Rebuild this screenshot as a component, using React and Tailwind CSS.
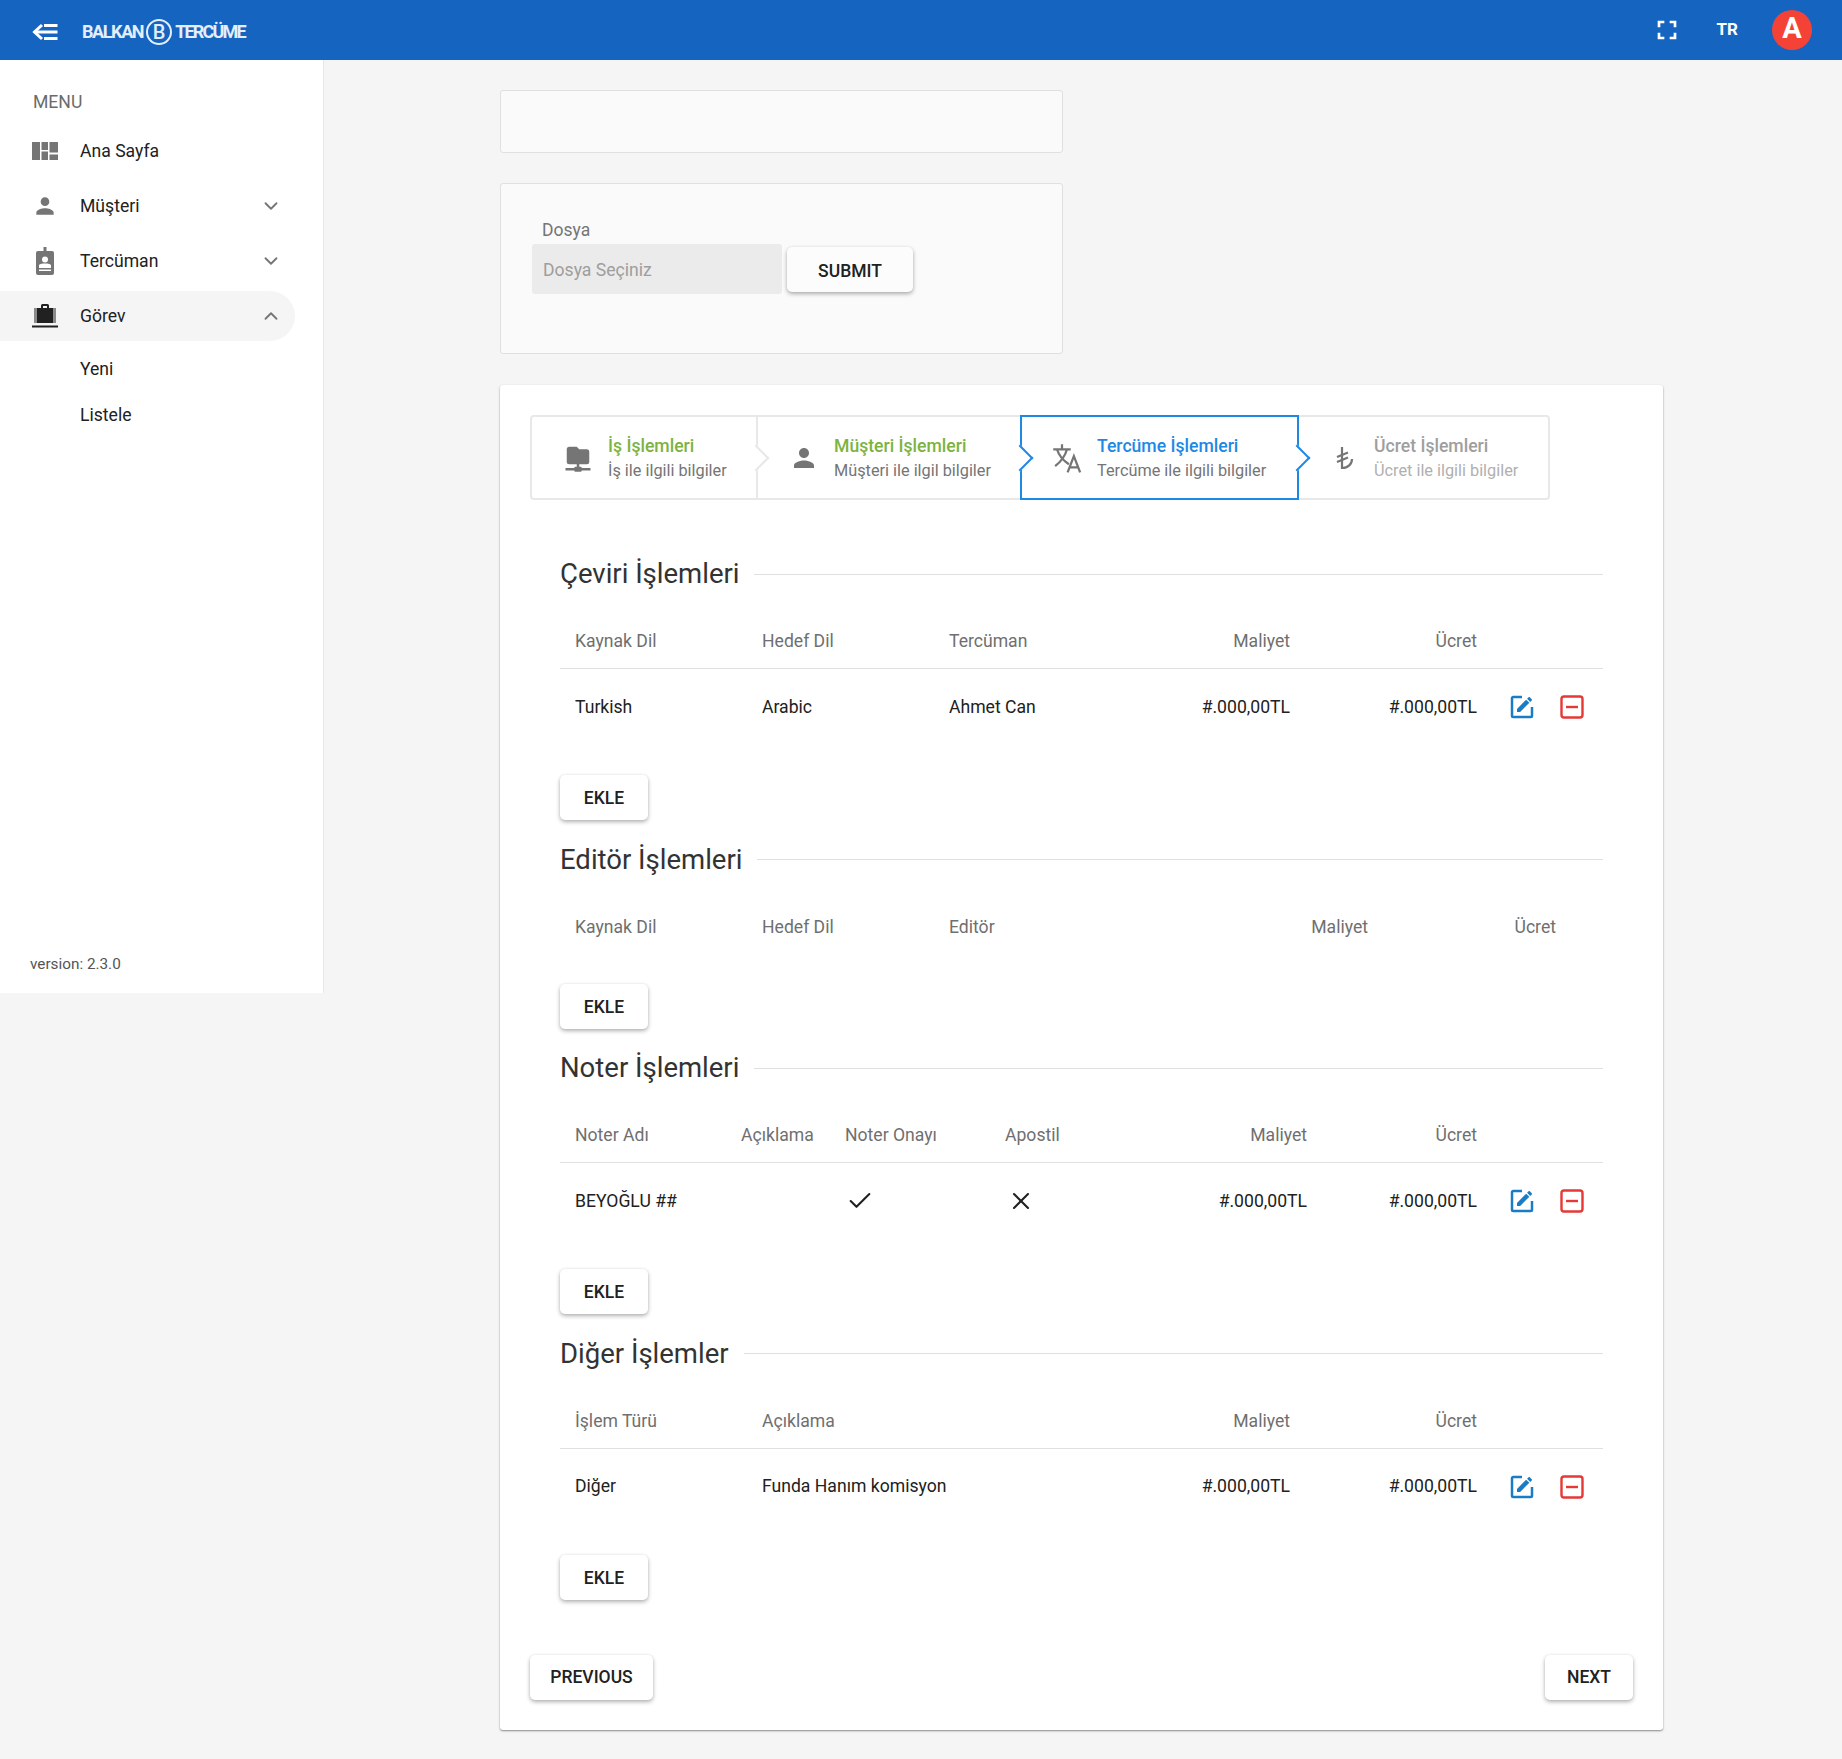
// Görev detail page: sidebar, file box, step bar and the four cost tables.
import React from 'react';
import { ChevronDown, ChevronUp, Check, X } from 'lucide-react';
import { MdPerson, MdFullscreen } from 'react-icons/md';

const FOLDER_NETWORK = 'M3,15V5A2,2 0 0,1 5,3H11L13,5H19A2,2 0 0,1 21,7V15A2,2 0 0,1 19,17H13V19H14A1,1 0 0,1 15,20H22V22H15A1,1 0 0,1 14,23H10A1,1 0 0,1 9,22H2V20H9A1,1 0 0,1 10,19H11V17H5A2,2 0 0,1 3,15Z';
const EDIT_BOX = 'M5,3C3.89,3 3,3.89 3,5V19A2,2 0 0,0 5,21H19A2,2 0 0,0 21,19V12H19V19H5V5H12V3H5M17.78,4C17.61,4 17.43,4.07 17.3,4.2L16.08,5.41L18.58,7.91L19.8,6.7C20.06,6.44 20.06,6 19.8,5.75L18.25,4.2C18.12,4.07 17.95,4 17.78,4M15.37,6.12L8,13.5V16H10.5L17.87,8.62L15.37,6.12Z';

// ---------- Small icons ----------

function BackIcon() {
  return (
    <svg className="w-[27px] h-[18px] mt-[3px] text-white" viewBox="0 0 27 18" fill="none" stroke="currentColor" strokeWidth="3">
      <path d="M11 2 L3.500 9 L11 16" />
      <path d="M3.500 9H26.500M13 2.500H26.500M13 15.500H26.500" />
    </svg>
  );
}

function DashIcon() {
  return (
    <svg className="w-[26px] h-[18px] text-[#757575]" viewBox="0 0 26 18" fill="currentColor">
      <path d="M0 0H8V18H0ZM9.500 0H16V8H9.500ZM9.500 9.500H16V18H9.500ZM17.500 0H26V10.500H17.500ZM17.500 12.500H26V18H17.500Z" />
    </svg>
  );
}

function BadgeIcon() {
  return (
    <svg className="w-[20px] h-[28px] text-[#757575]" viewBox="0 0 20 28" fill="currentColor">
      <path fillRule="evenodd" d="M8.500 0H11.500V4H17A2 2 0 0 1 19 6V26A2 2 0 0 1 17 28H3A2 2 0 0 1 1 26V6A2 2 0 0 1 3 4H8.500ZM10 9.500A3 3 0 1 0 10 15.500A3 3 0 1 0 10 9.500ZM4 21V18.500C4 17 7 16.500 10 16.500C13 16.500 16 17 16 18.500V21ZM4 22.500V24H16V22.500Z" />
    </svg>
  );
}

function BagIcon() {
  return (
    <svg className="w-[26px] h-[24px] text-[#212121]" viewBox="0 0 26 24" fill="currentColor">
      <path fillRule="evenodd" d="M9 4V1.500A1.500 1.500 0 0 1 10.500 0H15.500A1.500 1.500 0 0 1 17 1.500V4H21.500V19H4.500V4ZM11 2V4H15V2Z" />
      <path d="M2.500 4H3.500V19H2.500ZM22.500 4H23.500V19H22.500ZM0 21.500H26V23.500H0Z" />
    </svg>
  );
}

function TranslateIcon() {
  return (
    <svg className="w-[30px] h-[30px]" viewBox="0 0 24 24" fill="none" stroke="currentColor" strokeWidth="1.800">
      <path d="M1 5H15M8 1V5" />
      <path d="M4 5C5.500 10 9 14 13.500 17M12 5C10.500 10.500 7 15 2.500 18.500" />
      <path d="M12.500 23.500L17.500 10.500L22.500 23.500M14.200 19.500H20.800" />
    </svg>
  );
}

function LiraIcon() {
  return (
    <svg className="w-[24px] h-[26px] ml-[1px] text-[#757575]" viewBox="0 0 24 26" fill="none" stroke="currentColor" strokeWidth="2.200">
      <path d="M9 2V23C15 23 19 19 19 14" />
      <path d="M4 12L15 7.500M4 17L15 12.500" />
    </svg>
  );
}

function EditIcon() {
  return (
    <svg className="w-[30px] h-[30px] text-[#1a7cc4]" viewBox="0 0 24 24" fill="currentColor">
      <path d={EDIT_BOX} />
    </svg>
  );
}

function DeleteIcon() {
  return (
    <svg className="w-[24px] h-[24px] text-[#e53935]" viewBox="0 0 24 24" fill="none" stroke="currentColor" strokeWidth="2.400">
      <rect x="1.500" y="1.500" width="21" height="21" rx="2.500" />
      <path d="M6 12H18" />
    </svg>
  );
}

// ---------- Header + sidebar ----------

function Header() {
  return (
    <header className="h-[60px] bg-[#1565c0] flex items-center pl-[31px] pr-[30px] text-white">
      <BackIcon />
      <div className="ml-[24px] mt-[3px] flex items-center font-bold text-[18px] tracking-[-1.400px] text-[#e3eefa]">
        <span>BALKAN</span>
        <span className="mx-[3px] w-[26px] h-[26px] rounded-full border-2 border-[#e3eefa] flex items-center justify-center text-[20px] font-medium tracking-normal">B</span>
        <span className="tracking-[-1.800px]">TERCÜME</span>
      </div>
      <div className="ml-auto flex items-center">
        <MdFullscreen className="text-[32px]" />
        <span className="ml-[34px] text-[17px] font-bold">TR</span>
        <span className="ml-[34px] w-[40px] h-[40px] rounded-full bg-[#f44336] flex items-center justify-center text-[29px] font-bold pb-[3px]">A</span>
      </div>
    </header>
  );
}

function MenuRow({ icon, label, chevron, active }) {
  return (
    <div className={`h-[50px] w-[295px] mb-[5px] flex items-center rounded-r-full ${active ? 'bg-[#f5f5f5]' : ''}`}>
      <div className="w-[80px] pl-[32px] flex-none flex items-center justify-center pr-[22px]">{icon}</div>
      <span className="text-[17.600px] text-[#212121]">{label}</span>
      {chevron === 'down' && <ChevronDown className="ml-auto mr-[13px] w-[22px] h-[22px] text-[#757575]" />}
      {chevron === 'up' && <ChevronUp className="ml-auto mr-[13px] w-[22px] h-[22px] text-[#757575]" />}
    </div>
  );
}

function Sidebar() {
  return (
    <aside className="w-[324px] h-[933px] flex-none bg-white border-r border-[#e8e8e8] flex flex-col">
      <div className="pt-[30px] pl-[33px] text-[17.600px] leading-[24px] text-[#6b6b6b] mb-[12px]">MENU</div>
      <MenuRow icon={<DashIcon />} label="Ana Sayfa" />
      <MenuRow icon={<MdPerson className="text-[32px] text-[#757575]" />} label="Müşteri" chevron="down" />
      <MenuRow icon={<BadgeIcon />} label="Tercüman" chevron="down" />
      <MenuRow icon={<BagIcon />} label="Görev" chevron="up" active />
      <div className="pl-[80px] text-[17.600px] text-[#212121] mt-[9px] leading-[28px]">Yeni</div>
      <div className="pl-[80px] text-[17.600px] text-[#212121] mt-[18px] leading-[28px]">Listele</div>
      <div className="mt-auto mb-[17px] pl-[30px] text-[15.300px] text-[#555]">version: 2.3.0</div>
    </aside>
  );
}

// ---------- Step bar ----------

function StepArrow({ blue }) {
  return (
    <span className={`absolute z-10 top-1/2 right-0 w-[19px] h-[19px] translate-x-1/2 -translate-y-1/2 rotate-45 bg-white border-t-2 border-r-2 ${blue ? 'border-[#1e88e5]' : 'border-[#e8e8e8]'}`} />
  );
}

function Step({ className, icon, title, sub, titleColor, subColor, arrow }) {
  return (
    <div className={`relative flex items-center ${className}`}>
      <div className="w-[30px] flex-none flex justify-center text-[#757575]">{icon}</div>
      <div className="ml-[15px]">
        <div className={`text-[17.600px] font-medium leading-[26px] ${titleColor}`}>{title}</div>
        <div className={`text-[16.300px] leading-[24px] ${subColor}`}>{sub}</div>
      </div>
      {arrow}
    </div>
  );
}

function StepBar() {
  return (
    <div className="w-[1020px] h-[85px] border-2 border-[#e8e8e8] rounded-[4px] flex">
      <Step
        className="w-[226px] pl-[31px] border-r-2 border-[#e8e8e8]"
        icon={<svg className="w-[30px] h-[30px]" viewBox="0 0 24 24" fill="currentColor"><path d={FOLDER_NETWORK} /></svg>}
        title="İş İşlemleri"
        sub="İş ile ilgili bilgiler"
        titleColor="text-[#7cb342]"
        subColor="text-[#757575]"
        arrow={<StepArrow />}
      />
      <Step
        className="w-[262px] pl-[31px]"
        icon={<MdPerson className="text-[30px]" />}
        title="Müşteri İşlemleri"
        sub="Müşteri ile ilgil bilgiler"
        titleColor="text-[#7cb342]"
        subColor="text-[#757575]"
        arrow={<StepArrow blue />}
      />
      <Step
        className="w-[279px] -my-[2px] pl-[30px] border-2 border-[#1e88e5]"
        icon={<TranslateIcon />}
        title="Tercüme İşlemleri"
        sub="Tercüme ile ilgili bilgiler"
        titleColor="text-[#1e88e5]"
        subColor="text-[#757575]"
        arrow={<StepArrow blue />}
      />
      <Step
        className="flex-1 pl-[30px]"
        icon={<LiraIcon />}
        title="Ücret İşlemleri"
        sub="Ücret ile ilgili bilgiler"
        titleColor="text-[#9e9e9e]"
        subColor="text-[#b0b0b0]"
      />
    </div>
  );
}

// ---------- Tables ----------

function PlainButton({ children, className = '' }) {
  return (
    <button className={`h-[45px] bg-white rounded-[5px] text-[17.500px] font-medium text-[#212121] shadow-[0_2px_4px_rgba(0,0,0,0.3),0_0_3px_rgba(0,0,0,0.06)] ${className}`}>
      {children}
    </button>
  );
}

function Actions() {
  return (
    <div className="flex items-center pl-[15px]">
      <EditIcon />
      <span className="ml-[23px]"><DeleteIcon /></span>
    </div>
  );
}

function Section({ title, cols, head, rows = [] }) {
  return (
    <section>
      <div className="h-[42px] flex items-center">
        <h2 className="text-[27.500px] text-[#333]">{title}</h2>
        <div className="ml-[15px] flex-1 h-px bg-[#e0e0e0]" />
      </div>
      <div className={`mt-[16px] h-[58px] pt-[4px] grid items-center text-[17.600px] text-[#6f6f6f] ${cols} ${rows.length ? 'border-b border-[#e0e0e0]' : ''}`}>
        {head.map((h, i) => (
          <div key={i} className={`px-[15px] ${h.right ? 'text-right' : ''}`}>{h.label}</div>
        ))}
      </div>
      {rows.map((row, r) => (
        <div key={r} className={`h-[77px] pb-[1px] grid items-center text-[17.600px] text-[#212121] ${cols}`}>
          {row.map((c, i) => (
            <div key={i} className={head[i] && head[i].right ? 'px-[15px] text-right' : c && c.type === Actions ? '' : 'px-[15px]'}>{c}</div>
          ))}
        </div>
      ))}
      <PlainButton className="mt-[29px] mb-[18.500px] pt-[2px] w-[88px] block">EKLE</PlainButton>
    </section>
  );
}

const money = '#.000,00TL';

export default function App() {
  return (
    <div className="min-h-[1759px] bg-[#f5f5f5] font-['Roboto',sans-serif]">
      <Header />
      <div className="flex items-start">
        <Sidebar />
        <main className="flex-1 pl-[176px] pt-[30px] pb-[30px]">
          <div className="w-[563px] h-[63px] bg-[#fafafa] border border-[#e0e0e0] rounded-[3px]" />
          <div className="mt-[30px] w-[563px] h-[171px] bg-[#fafafa] border border-[#e0e0e0] rounded-[3px] pl-[31px] pt-[33px]">
            <div className="pl-[10px] text-[17.500px] leading-[26px] text-[#757575]">Dosya</div>
            <div className="flex items-center mt-[1px]">
              <div className="w-[250px] h-[50px] bg-[#ebebeb] rounded-[3px] pl-[11px] pt-[3px] flex items-center text-[17.600px] text-[#9e9e9e]">Dosya Seçiniz</div>
              <PlainButton className="ml-[5px] w-[126px] pt-[4px] !bg-[#fcfcfc]">SUBMIT</PlainButton>
            </div>
          </div>
          <div className="mt-[31px] w-[1163px] bg-white rounded-[3px] shadow-[0_1px_2px_rgba(0,0,0,0.45)] pt-[30px] px-[30px] pb-[30px]">
            <StepBar />
            <div className="mt-[53px] px-[30px]">
              <Section
                title="Çeviri İşlemleri"
                cols="grid-cols-[187px_187px_187px_184px_187px_1fr]"
                head={[{ label: 'Kaynak Dil' }, { label: 'Hedef Dil' }, { label: 'Tercüman' }, { label: 'Maliyet', right: true }, { label: 'Ücret', right: true }, { label: '' }]}
                rows={[['Turkish', 'Arabic', 'Ahmet Can', money, money, <Actions />]]}
              />
              <Section
                title="Editör İşlemleri"
                cols="grid-cols-[187px_187px_262px_187px_188px_1fr]"
                head={[{ label: 'Kaynak Dil' }, { label: 'Hedef Dil' }, { label: 'Editör' }, { label: 'Maliyet', right: true }, { label: 'Ücret', right: true }, { label: '' }]}
              />
              <Section
                title="Noter İşlemleri"
                cols="grid-cols-[166px_104px_160px_160px_172px_170px_1fr]"
                head={[{ label: 'Noter Adı' }, { label: 'Açıklama' }, { label: 'Noter Onayı' }, { label: 'Apostil' }, { label: 'Maliyet', right: true }, { label: 'Ücret', right: true }, { label: '' }]}
                rows={[[
                  'BEYOĞLU ##',
                  '',
                  <Check className="w-[28px] h-[28px] ml-[1px]" strokeWidth={1.800} />,
                  <X className="w-[28px] h-[28px] ml-[2px]" strokeWidth={1.800} />,
                  money,
                  money,
                  <Actions />,
                ]]}
              />
              <Section
                title="Diğer İşlemler"
                cols="grid-cols-[187px_374px_184px_187px_1fr]"
                head={[{ label: 'İşlem Türü' }, { label: 'Açıklama' }, { label: 'Maliyet', right: true }, { label: 'Ücret', right: true }, { label: '' }]}
                rows={[['Diğer', 'Funda Hanım komisyon', money, money, <Actions />]]}
              />
            </div>
            <div className="mt-[55px] flex justify-between">
              <PlainButton className="w-[123px] pt-[1px]">PREVIOUS</PlainButton>
              <PlainButton className="w-[88px] pt-[1px]">NEXT</PlainButton>
            </div>
          </div>
        </main>
      </div>
    </div>
  );
}
